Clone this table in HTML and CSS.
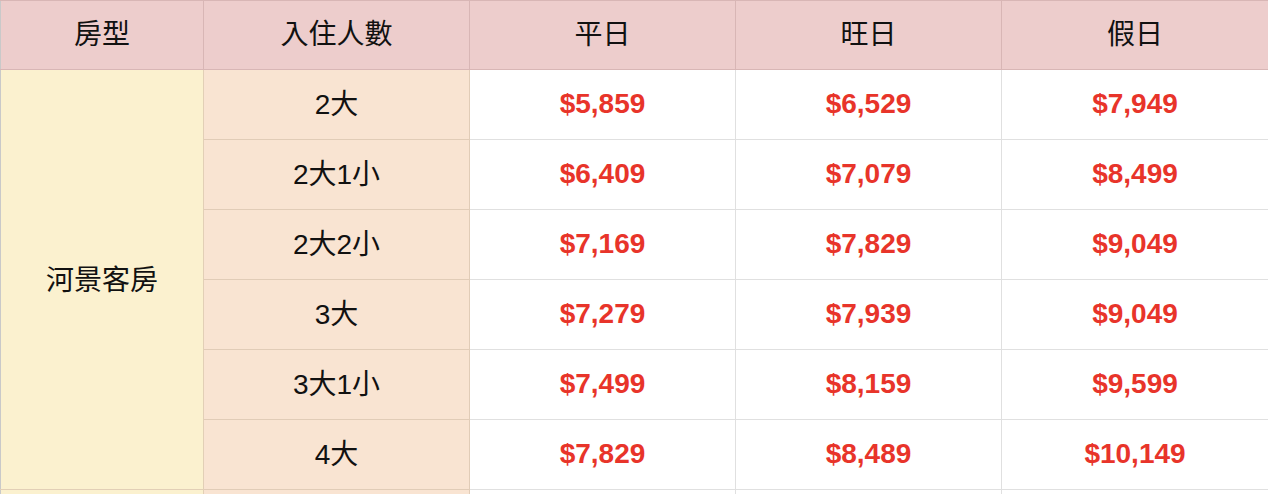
FILE: index.html
```html
<!DOCTYPE html>
<html lang="zh-Hant">
<head>
<meta charset="utf-8">
<title>房型價格</title>
<link rel="stylesheet" href="styles.css">
</head>
<body>
<table class="price-table">
  <colgroup>
    <col class="c-type">
    <col class="c-guest">
    <col class="c-price">
    <col class="c-price">
    <col class="c-price-last">
  </colgroup>
  <thead>
    <tr>
      <th>房型</th>
      <th>入住人數</th>
      <th>平日</th>
      <th>旺日</th>
      <th>假日</th>
    </tr>
  </thead>
  <tbody>
    <tr>
      <td class="room" rowspan="6">河景客房</td>
      <td class="guest">2大</td>
      <td class="price">$5,859</td>
      <td class="price">$6,529</td>
      <td class="price">$7,949</td>
    </tr>
    <tr>
      <td class="guest">2大1小</td>
      <td class="price">$6,409</td>
      <td class="price">$7,079</td>
      <td class="price">$8,499</td>
    </tr>
    <tr>
      <td class="guest">2大2小</td>
      <td class="price">$7,169</td>
      <td class="price">$7,829</td>
      <td class="price">$9,049</td>
    </tr>
    <tr>
      <td class="guest">3大</td>
      <td class="price">$7,279</td>
      <td class="price">$7,939</td>
      <td class="price">$9,049</td>
    </tr>
    <tr>
      <td class="guest">3大1小</td>
      <td class="price">$7,499</td>
      <td class="price">$8,159</td>
      <td class="price">$9,599</td>
    </tr>
    <tr>
      <td class="guest">4大</td>
      <td class="price">$7,829</td>
      <td class="price">$8,489</td>
      <td class="price">$10,149</td>
    </tr>
    <tr>
      <td class="room"></td>
      <td class="guest"></td>
      <td class="price"></td>
      <td class="price"></td>
      <td class="price"></td>
    </tr>
  </tbody>
</table>
</body>
</html>
```

FILE: styles.css
```css
html, body {
  margin: 0;
  padding: 0;
  overflow: hidden;
  background: #ffffff;
}

.price-table {
  width: 1268px;
  table-layout: fixed;
  border-collapse: collapse;
  font-family: "Liberation Sans", "Noto Sans CJK TC", sans-serif;
  color: #111111;
}

.c-type { width: 203px; }
.c-guest { width: 266px; }
.c-price { width: 266px; }
.c-price-last { width: 267px; }

.price-table th,
.price-table td {
  height: 70px;
  padding: 0;
  text-align: center;
  vertical-align: middle;
  font-size: 28px;
  line-height: 1;
  box-sizing: border-box;
}

.price-table th {
  height: 69px;
  background: #edcdcc;
  font-weight: normal;
  border: 1px solid #d8b6b5;
}

.price-table td.room {
  background: #fbf1cf;
  border: 1px solid #e2cfb6;
  padding-top: 3px;
}

.price-table td.guest {
  background: #f9e4d2;
  border: 1px solid #e1ccb7;
}

.price-table td.price {
  background: #ffffff;
  border: 1px solid #e0e0e0;
  color: #e8342a;
  font-weight: bold;
  padding-bottom: 1px;
}

.price-table tr > :first-child {
  border-left-color: #c9c9c9;
}
```
